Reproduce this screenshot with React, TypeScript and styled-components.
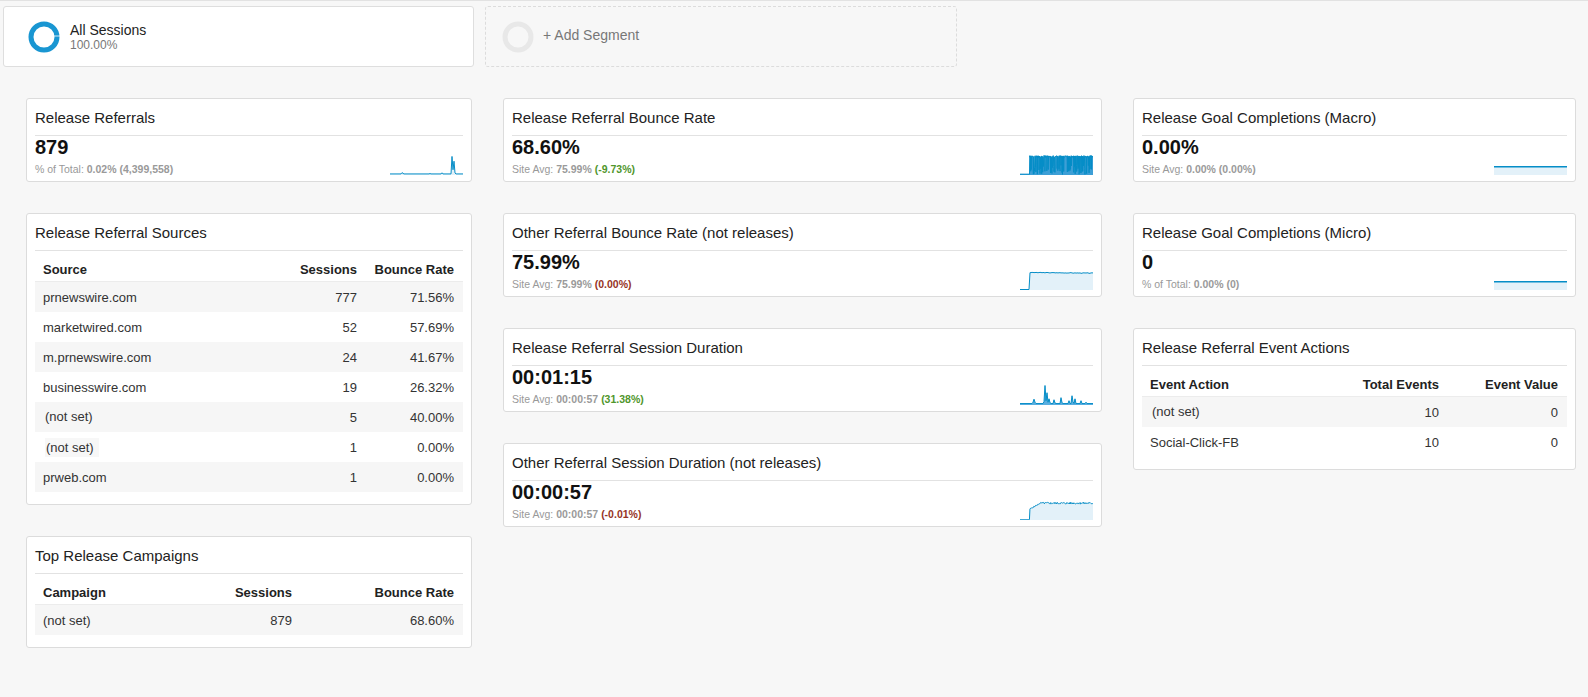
import React from "react";
import styled, { createGlobalStyle } from "styled-components";

const GlobalStyle = createGlobalStyle`
  html, body { margin: 0; padding: 0; background: #f7f7f7; }
  body { font-family: "Liberation Sans", Arial, Helvetica, sans-serif; color: #222; }
  * { box-sizing: border-box; }
`;

const BLUE = "#058dc7";
const FILL = "#e3f1f9";

const Page = styled.div`
  min-height: 697px;
  border-top: 1px solid #e2e2e2;
  background: #f7f7f7;
`;

const SegmentBar = styled.div`
  display: flex;
  gap: 11px;
  padding: 5px 0 0 3px;
`;

const SegmentCard = styled.div<{ $dashed?: boolean }>`
  width: ${(p) => (p.$dashed ? 472 : 471)}px;
  height: 61px;
  display: flex;
  align-items: center;
  gap: ${(p) => (p.$dashed ? 9 : 10)}px;
  padding-left: ${(p) => (p.$dashed ? 16 : 24)}px;
  background: ${(p) => (p.$dashed ? "transparent" : "#fff")};
  border: 1px ${(p) => (p.$dashed ? "dashed #dcdcdc" : "solid #dedede")};
  border-radius: 3px;
`;

const SegmentText = styled.div`
  display: flex;
  flex-direction: column;
`;

const SegmentName = styled.div<{ $muted?: boolean }>`
  font-size: 14px;
  line-height: 16px;
  color: ${(p) => (p.$muted ? "#777" : "#222")};
  margin-bottom: ${(p) => (p.$muted ? 4 : 0)}px;
`;

const SegmentPct = styled.div`
  font-size: 12px;
  line-height: 14px;
  color: #777;
`;

const Dashboard = styled.div`
  display: grid;
  grid-template-columns: 446px 599px 443px;
  column-gap: 31px;
  align-items: start;
  padding: 31px 0 0 26px;
`;

const Column = styled.div`
  display: flex;
  flex-direction: column;
  gap: 31px;
`;

const Card = styled.section<{ $table?: boolean }>`
  background: #fff;
  border: 1px solid #dcdcdc;
  border-radius: 3px;
  padding: 0 8px ${(p) => (p.$table ? 12 : 5)}px;
`;

const CardTitle = styled.h3`
  margin: 0;
  padding: 10px 0 8px;
  font-size: 15px;
  line-height: 18px;
  font-weight: normal;
  color: #222;
  border-bottom: 1px solid #e2e2e2;
`;

const ScoreBody = styled.div`
  display: flex;
  justify-content: space-between;
  align-items: flex-end;
`;

const Value = styled.div`
  font-size: 20px;
  line-height: 22px;
  font-weight: bold;
  color: #111;
`;

const Sub = styled.div`
  margin-top: 4px;
  font-size: 10.5px;
  line-height: 14px;
  color: #999;
  white-space: nowrap;
`;

const SubStrong = styled.b<{ $tone?: "up" | "down" }>`
  font-weight: bold;
  color: ${(p) => (p.$tone === "up" ? "#4f962c" : p.$tone === "down" ? "#963426" : "#9a9a9a")};
`;

const SparkSvg = styled.svg`
  display: block;
  margin-bottom: 1px;
  flex: none;
`;

const Table = styled.div`
  margin-top: 6px;
`;

const TRow = styled.div<{ $cols: string; $shade?: boolean; $head?: boolean }>`
  display: grid;
  grid-template-columns: ${(p) => p.$cols};
  align-items: center;
  height: ${(p) => (p.$head ? 25 : 30)}px;
  background: ${(p) => (p.$shade ? "#f6f6f6" : "transparent")};
  border-bottom: ${(p) => (p.$head ? "1px solid #ececec" : "none")};
  font-size: 13px;
  font-weight: ${(p) => (p.$head ? "bold" : "normal")};
  color: ${(p) => (p.$head ? "#222" : "#333")};
`;

const Cell = styled.div<{ $right?: boolean }>`
  padding: 0 9px 0 8px;
  text-align: ${(p) => (p.$right ? "right" : "left")};
  white-space: nowrap;
`;

const NotSet = styled.span<{ $boxed?: boolean }>`
  display: inline-block;
  margin-left: 2px;
  padding: ${(p) => (p.$boxed ? "2px 5px 2px 1px" : "0 0 2px")};
  background: ${(p) => (p.$boxed ? "#f7f7f7" : "transparent")};
`;

/* ---------- sparklines ---------- */

function rng(seed: number) {
  let s = seed;
  return () => {
    s = (s * 9301 + 49297) % 233280;
    return s / 233280;
  };
}

function build(n: number, f: (i: number, r: () => number) => number, seed = 7) {
  const r = rng(seed);
  return Array.from({ length: n }, (_, i) => f(i, r));
}

const referralsData = build(74, (i) => {
  const spikes: Record<number, number> = { 12: 0.1, 13: 0.06, 40: 0.05, 52: 0.09, 62: 0.95, 63: 0.25, 64: 0.7, 65: 0.08 };
  return spikes[i] ?? 0.03;
});

const bounceData = build(300, (i, r) => {
  if (i < 40) return 0.02;
  const a = r();
  const b = r();
  return a < 0.72 ? 0.9 + 0.1 * b : 0.0 + 0.5 * b;
}, 11);

const otherBounceData = build(74, (i, r) => {
  if (i < 10) return 0;
  return 0.9 - (i / 74) * 0.04 + (r() - 0.5) * 0.03;
}, 3);

const durationData = build(74, (i) => {
  const s: Record<number, number> = {
    13: 0.12, 14: 0.28, 15: 0.12, 24: 0.15, 25: 1.0, 26: 0.2, 27: 0.62, 28: 0.12, 29: 0.3, 30: 0.1,
    34: 0.25, 35: 0.08, 41: 0.36, 42: 0.1, 49: 0.2, 52: 0.46, 53: 0.15, 55: 0.3, 61: 0.2, 66: 0.12,
  };
  return s[i] ?? 0.05;
});

const otherDurationData = build(148, (i, r) => {
  if (i < 20) return 0;
  if (i < 40) return 0.55 + ((i - 20) / 20) * 0.3 + (r() - 0.5) * 0.06;
  return 0.86 + (r() - 0.5) * 0.1;
}, 5);

const flatData = build(74, () => 0.41);

const Sparkline: React.FC<{ data: number[]; strokeWidth?: number; area?: string }> = ({
  data,
  strokeWidth = 1,
  area = FILL,
}) => {
  const w = 73;
  const h = 20;
  const n = data.length;
  const pts = data.map((v, i) => [(i * w) / (n - 1), h - 0.5 - v * (h - 1)]);
  const line = pts.map((p, i) => `${i ? "L" : "M"}${p[0].toFixed(2)},${p[1].toFixed(2)}`).join("");
  const areaPath = `${line}L${w},${h}L0,${h}Z`;
  return (
    <SparkSvg width={w} height={h} viewBox={`0 0 ${w} ${h}`}>
      <path d={areaPath} fill={area} />
      <path d={line} fill="none" stroke={BLUE} strokeWidth={strokeWidth} strokeLinejoin="round" />
    </SparkSvg>
  );
};

const Donut: React.FC<{ color: string; gap?: boolean }> = ({ color, gap }) => (
  <svg width="32" height="32" viewBox="0 0 32 32" style={{ flex: "none" }}>
    <circle cx="16" cy="16" r="13" fill="none" stroke={color} strokeWidth="5" />
    {gap && <rect x="26" y="14.6" width="7" height="0.8" fill="#fff" />}
  </svg>
);

/* ---------- components ---------- */

type SubPart = { text: string; strong?: boolean; tone?: "up" | "down" };

const Scorecard: React.FC<{
  title: string;
  value: string;
  sub: SubPart[];
  data: number[];
  strokeWidth?: number;
  area?: string;
}> = ({ title, value, sub, data, strokeWidth, area }) => (
  <Card>
    <CardTitle>{title}</CardTitle>
    <ScoreBody>
      <div>
        <Value>{value}</Value>
        <Sub>
          {sub.map((p, i) =>
            p.strong ? (
              <SubStrong key={i} $tone={p.tone}>
                {p.text}
              </SubStrong>
            ) : (
              <span key={i}>{p.text}</span>
            )
          )}
        </Sub>
      </div>
      <Sparkline data={data} strokeWidth={strokeWidth} area={area} />
    </ScoreBody>
  </Card>
);

type RowData = { cells: React.ReactNode[] };

const DataTable: React.FC<{ title: string; cols: string; head: string[]; rows: RowData[] }> = ({
  title,
  cols,
  head,
  rows,
}) => (
  <Card $table>
    <CardTitle>{title}</CardTitle>
    <Table>
      <TRow $cols={cols} $head>
        {head.map((h, i) => (
          <Cell key={i} $right={i > 0}>
            {h}
          </Cell>
        ))}
      </TRow>
      {rows.map((r, ri) => (
        <TRow key={ri} $cols={cols} $shade={ri % 2 === 0}>
          {r.cells.map((c, i) => (
            <Cell key={i} $right={i > 0}>
              {c}
            </Cell>
          ))}
        </TRow>
      ))}
    </Table>
  </Card>
);

const sourcesRows: RowData[] = [
  { cells: ["prnewswire.com", "777", "71.56%"] },
  { cells: ["marketwired.com", "52", "57.69%"] },
  { cells: ["m.prnewswire.com", "24", "41.67%"] },
  { cells: ["businesswire.com", "19", "26.32%"] },
  { cells: [<NotSet>(not set)</NotSet>, "5", "40.00%"] },
  { cells: [<NotSet $boxed>(not set)</NotSet>, "1", "0.00%"] },
  { cells: ["prweb.com", "1", "0.00%"] },
];

const eventRows: RowData[] = [
  { cells: [<NotSet>(not set)</NotSet>, "10", "0"] },
  { cells: ["Social-Click-FB", "10", "0"] },
];

export default function App() {
  return (
    <>
      <GlobalStyle />
      <Page>
        <SegmentBar>
          <SegmentCard>
            <Donut color="#1996d2" gap />
            <SegmentText>
              <SegmentName>All Sessions</SegmentName>
              <SegmentPct>100.00%</SegmentPct>
            </SegmentText>
          </SegmentCard>
          <SegmentCard $dashed>
            <Donut color="#e8e8e8" />
            <SegmentName $muted>+ Add Segment</SegmentName>
          </SegmentCard>
        </SegmentBar>

        <Dashboard>
          <Column>
            <Scorecard
              title="Release Referrals"
              value="879"
              sub={[{ text: "% of Total: " }, { text: "0.02% (4,399,558)", strong: true }]}
              data={referralsData}
            />
            <DataTable
              title="Release Referral Sources"
              cols="1fr 80px 97px"
              head={["Source", "Sessions", "Bounce Rate"]}
              rows={sourcesRows}
            />
            <DataTable
              title="Top Release Campaigns"
              cols="1fr 100px 162px"
              head={["Campaign", "Sessions", "Bounce Rate"]}
              rows={[{ cells: ["(not set)", "879", "68.60%"] }]}
            />
          </Column>

          <Column>
            <Scorecard
              title="Release Referral Bounce Rate"
              value="68.60%"
              sub={[
                { text: "Site Avg: " },
                { text: "75.99% ", strong: true },
                { text: "(-9.73%)", strong: true, tone: "up" },
              ]}
              data={bounceData}
              area="#3d9fd6"
            />
            <Scorecard
              title="Other Referral Bounce Rate (not releases)"
              value="75.99%"
              sub={[
                { text: "Site Avg: " },
                { text: "75.99% ", strong: true },
                { text: "(0.00%)", strong: true, tone: "down" },
              ]}
              data={otherBounceData}
            />
            <Scorecard
              title="Release Referral Session Duration"
              value="00:01:15"
              sub={[
                { text: "Site Avg: " },
                { text: "00:00:57 ", strong: true },
                { text: "(31.38%)", strong: true, tone: "up" },
              ]}
              data={durationData}
              area="#5aaee0"
            />
            <Scorecard
              title="Other Referral Session Duration (not releases)"
              value="00:00:57"
              sub={[
                { text: "Site Avg: " },
                { text: "00:00:57 ", strong: true },
                { text: "(-0.01%)", strong: true, tone: "down" },
              ]}
              data={otherDurationData}
            />
          </Column>

          <Column>
            <Scorecard
              title="Release Goal Completions (Macro)"
              value="0.00%"
              sub={[{ text: "Site Avg: " }, { text: "0.00% (0.00%)", strong: true }]}
              data={flatData}
              strokeWidth={1.5}
            />
            <Scorecard
              title="Release Goal Completions (Micro)"
              value="0"
              sub={[{ text: "% of Total: " }, { text: "0.00% (0)", strong: true }]}
              data={flatData}
              strokeWidth={1.5}
            />
            <DataTable
              title="Release Referral Event Actions"
              cols="1fr 120px 119px"
              head={["Event Action", "Total Events", "Event Value"]}
              rows={eventRows}
            />
          </Column>
        </Dashboard>
      </Page>
    </>
  );
}
